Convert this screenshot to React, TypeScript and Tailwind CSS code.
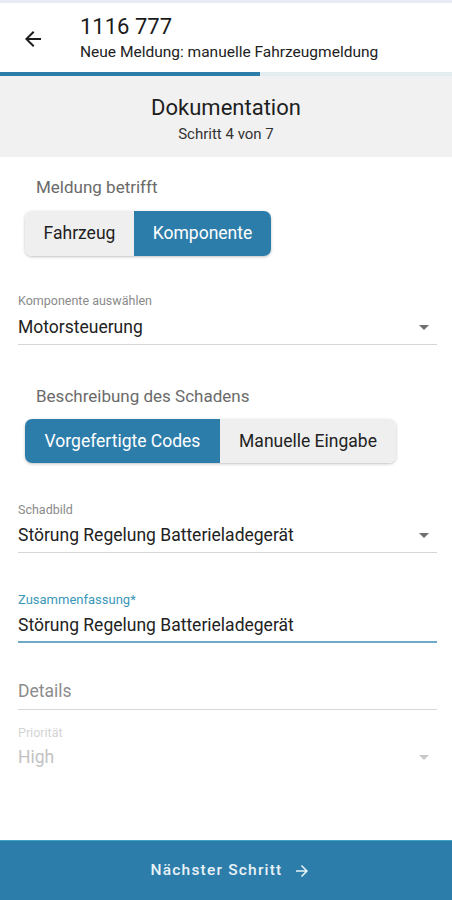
import React from "react";

const font = { fontFamily: "Roboto, 'Noto Sans', Arial, sans-serif" };

function DropArrow({ light }: { light?: boolean }) {
  return (
    <svg width="24" height="24" viewBox="0 0 24 24" className={light ? "text-[#c8c8c8]" : "text-[#707070]"}>
      <path d="M7 10l5 5 5-5z" fill="currentColor" />
    </svg>
  );
}

function Segmented({
  options,
  active,
  widths,
  height,
}: {
  options: string[];
  active: number;
  widths: string[];
  height: string;
}) {
  return (
    <div className={`inline-flex ${height} rounded-[7px] overflow-hidden shadow-[0_1px_3px_rgba(0,0,0,0.25)]`}>
      {options.map((o, i) => (
        <div
          key={o}
          className={`${widths[i]} flex items-center justify-center text-[17.5px] ${
            i === active ? "bg-[#2d7dab] text-white" : "bg-[#efefef] text-[#222]"
          }`}
        >
          {o}
        </div>
      ))}
    </div>
  );
}

export default function App() {
  return (
    <div style={font} className="w-[452px] h-[900px] flex flex-col bg-white overflow-hidden">
      {/* status strip */}
      <div className="h-[3px] bg-[#e8ecf4]" />

      {/* Header */}
      <div className="h-[69px] flex items-center">
        <div className="w-[80px] flex items-center pl-[21px] pt-[2px]">
          <svg width="24" height="24" viewBox="0 0 24 24" className="text-[#1d1d1d]">
            <path d="M20 11H7.83l5.59-5.59L12 4l-8 8 8 8 1.41-1.41L7.83 13H20v-2z" fill="currentColor" />
          </svg>
        </div>
        <div className="flex flex-col">
          <span className="text-[22px] leading-[26px] text-[#1a1a1a]">1116 777</span>
          <span className="text-[15.5px] leading-[18px] mt-[3px] text-[#222]">Neue Meldung: manuelle Fahrzeugmeldung</span>
        </div>
      </div>

      {/* Progress */}
      <div className="h-[4px] bg-[#e3ecef] flex">
        <div className="w-[260px] bg-[#2d7dab]" />
      </div>

      {/* Step title */}
      <div className="h-[81px] bg-[#f1f1f1] flex flex-col items-center pt-[19px]">
        <span className="text-[22px] leading-[26px] text-[#1e1e1e]">Dokumentation</span>
        <span className="text-[15px] leading-[18px] mt-[4px] text-[#333]">Schritt 4 von 7</span>
      </div>

      {/* Form */}
      <div className="flex flex-col pl-[18px] pr-[15px]">
        <span className="mt-[18px] pl-[18px] text-[17px] leading-[24px] text-[#6a6a6a]">Meldung betrifft</span>
        <div className="mt-[12px] pl-[7px]">
          <Segmented
            options={["Fahrzeug", "Komponente"]}
            active={1}
            widths={["w-[109px]", "w-[137px]"]}
            height="h-[45px]"
          />
        </div>

        <span className="mt-[37px] text-[12.5px] leading-[16px] text-[#8a8a8a]">Komponente auswählen</span>
        <div className="mt-[6px] pb-[5px] border-b border-[#d6d6d6] flex items-center justify-between">
          <span className="text-[17.5px] leading-[24px] text-[#222]">Motorsteuerung</span>
          <div className="mr-[1px]"><DropArrow /></div>
        </div>

        <span className="mt-[39px] pl-[18px] text-[17px] leading-[24px] text-[#6a6a6a]">Beschreibung des Schadens</span>
        <div className="mt-[11px] pl-[7px]">
          <Segmented
            options={["Vorgefertigte Codes", "Manuelle Eingabe"]}
            active={0}
            widths={["w-[195px]", "w-[176px]"]}
            height="h-[44px]"
          />
        </div>

        <span className="mt-[39px] text-[12.5px] leading-[16px] text-[#8a8a8a]">Schadbild</span>
        <div className="mt-[5px] pb-[5px] border-b border-[#d6d6d6] flex items-center justify-between">
          <span className="text-[17.5px] leading-[24px] text-[#222]">Störung Regelung Batterieladegerät</span>
          <div className="mr-[1px]"><DropArrow /></div>
        </div>

        <span className="mt-[39px] text-[13px] leading-[16px] text-[#3b98b8]">Zusammenfassung*</span>
        <div className="mt-[5px] pb-[3px] border-b-2 border-[#6fa9c6]">
          <span className="text-[17.5px] leading-[24px] text-[#222]">Störung Regelung Batterieladegerät</span>
        </div>

        <div className="mt-[36px] pb-[5px] border-b border-[#d6d6d6]">
          <span className="text-[17.5px] leading-[24px] text-[#8c8c8c]">Details</span>
        </div>

        <span className="mt-[15px] text-[12.5px] leading-[16px] text-[#d4d4d4]">Priorität</span>
        <div className="mt-[4px] flex items-center justify-between">
          <span className="text-[17.5px] leading-[24px] text-[#c2c2c2]">High</span>
          <div className="mr-[1px]"><DropArrow light /></div>
        </div>
      </div>

      {/* Bottom action */}
      <div className="mt-auto h-[60px] bg-[#2d7dab] border-t border-[#3fa4c4] flex items-center justify-center gap-[11px] pl-[10px]">
        <span className="text-[15.5px] font-medium tracking-[1.2px] text-[#e8f2f7]">Nächster Schritt</span>
        <svg width="18" height="18" viewBox="0 0 24 24" className="text-[#e8f2f7]">
          <path d="M12 4l-1.41 1.41L16.17 11H4v2h12.17l-5.58 5.59L12 20l8-8z" fill="currentColor" />
        </svg>
      </div>
    </div>
  );
}
